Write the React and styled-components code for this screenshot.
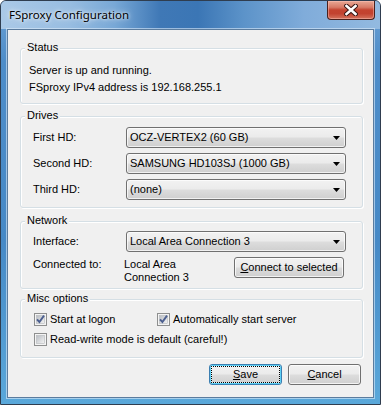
import React from 'react';
import styled, { createGlobalStyle } from 'styled-components';

const Global = createGlobalStyle`
  html, body { margin: 0; padding: 0; background: #ffffff; }
  body { font-family: "Liberation Sans", Arial, sans-serif; font-size: 11px; color: #000; }
  * { box-sizing: border-box; }
`;

const Frame = styled.div`
  width: 381px;
  height: 405px;
  border: 1px solid #2f3d4f;
  border-radius: 6px 6px 0 0;
  background: linear-gradient(to bottom, #6fa2d4 0px, #4e8dc9 60px, #4689c6 240px, #5aa8da 100%);
  display: flex;
  flex-direction: column;
  overflow: hidden;
`;

const TitleBar = styled.div`
  height: 28px;
  flex: none;
  display: flex;
  justify-content: space-between;
  align-items: flex-start;
  padding: 0 5px 0 8px;
  background: linear-gradient(
    to right,
    #aac9e7 0%,
    #98bde1 18%,
    #78a8d6 30%,
    #3f78b6 42%,
    #3b76b5 52%,
    #5c93c9 64%,
    #80acda 80%,
    #93bae0 100%
  );
`;

const Title = styled.div`
  margin-top: 6px;
  font-family: "Noto Sans", "Open Sans", sans-serif;
  font-size: 11.5px;
  line-height: 16px;
  color: #000;
  text-shadow: 0 0 6px rgba(255, 255, 255, 0.9), 0 0 3px rgba(255, 255, 255, 0.8);
`;

const CloseButton = styled.div`
  width: 48px;
  height: 19px;
  border: 1px solid #4a201c;
  border-top: none;
  border-radius: 0 0 4px 4px;
  background: linear-gradient(to bottom, #e9a895 0%, #d77a66 35%, #c4432f 50%, #c24230 70%, #d4735d 100%);
  box-shadow: inset 0 0 0 1px rgba(255, 200, 190, 0.45);
  display: flex;
  align-items: center;
  justify-content: center;
`;

const Client = styled.div`
  margin: 0 6px;
  height: 369px;
  flex: none;
  border: 1px solid #5b7c9e;
  box-shadow: 0 0 0 1px rgba(220, 235, 250, 0.6);
  background: #f0f0f0;
  padding: 18px 10px 0 12px;
  display: flex;
  flex-direction: column;
`;

const Group = styled.div`
  position: relative;
  height: ${(p) => p.$h}px;
  margin-top: ${(p) => p.$mt || 0}px;
  border: 1px solid #d5dfe5;
  border-radius: 3px;
  box-shadow: inset 1px 1px 0 #ffffff, 1px 1px 0 #ffffff;
  padding: ${(p) => p.$pt}px 0 0 ${(p) => p.$pl}px;
  display: flex;
  flex-direction: column;
  gap: ${(p) => p.$gap || 0}px;
`;

const Legend = styled.span`
  position: absolute;
  top: -8px;
  left: 4px;
  padding: 0 2px;
  background: #f0f0f0;
  line-height: 13px;
`;

const Line = styled.div`
  line-height: 13px;
  white-space: nowrap;
`;

const FieldRow = styled.div`
  display: flex;
  align-items: ${(p) => (p.$top ? 'flex-start' : 'center')};
  min-height: 21px;
`;

const Label = styled.div`
  width: ${(p) => p.$w}px;
  flex: none;
  line-height: 13px;
  white-space: nowrap;
`;

const Combo = styled.div`
  width: 220px;
  height: 21px;
  flex: none;
  border: 1px solid #707070;
  border-radius: 3px;
  background: linear-gradient(to bottom, #f2f2f2 0%, #ebebeb 48%, #dddddd 52%, #cfcfcf 100%);
  box-shadow: inset 0 0 0 1px rgba(255, 255, 255, 0.7);
  display: flex;
  align-items: center;
  justify-content: space-between;
  padding: 0 5px 0 3px;
  line-height: 13px;
  white-space: nowrap;
`;

const Value = styled.div`
  width: 110px;
  flex: none;
  line-height: 13px;
  padding-top: 1px;
`;

const Button = styled.div`
  position: relative;
  width: ${(p) => p.$w}px;
  height: 21px;
  flex: none;
  border: 1px solid ${(p) => (p.$default ? '#3c7fb1' : '#707070')};
  border-radius: 3px;
  background: linear-gradient(to bottom, #f2f2f2 0%, #ebebeb 48%, #dddddd 52%, #cfcfcf 100%);
  box-shadow: ${(p) =>
    p.$default
      ? 'inset 0 0 0 1px #5ed2f6, inset 0 0 0 2px rgba(255,255,255,0.5)'
      : 'inset 0 0 0 1px rgba(255,255,255,0.75)'};
  display: flex;
  align-items: center;
  justify-content: center;
  line-height: 13px;
  white-space: nowrap;

  ${(p) =>
    p.$default &&
    `&::after {
      content: "";
      position: absolute;
      inset: 1px;
      border: 1px dotted #000;
      border-radius: 1px;
    }`}
`;

const CheckRow = styled.div`
  display: flex;
  align-items: flex-start;
`;

const CheckItem = styled.div`
  display: flex;
  align-items: flex-start;
  gap: 3px;
  width: ${(p) => (p.$w ? `${p.$w}px` : 'auto')};
  flex: none;
  line-height: 13px;
  white-space: nowrap;
`;

const ButtonRow = styled.div`
  display: flex;
  justify-content: flex-end;
  gap: 6px;
  margin-top: 6px;
  margin-right: 2px;
`;

const Arrow = () => (
  <svg width="7" height="4" viewBox="0 0 7 4">
    <polygon points="0,0 7,0 3.5,4" fill="#000" />
  </svg>
);

const CloseX = () => (
  <svg width="14" height="12" viewBox="0 0 14 12">
    <path d="M2.5 2 L11.5 10 M11.5 2 L2.5 10" stroke="#3a1714" strokeWidth="4.6" strokeLinecap="square" />
    <path d="M2.5 2 L11.5 10 M11.5 2 L2.5 10" stroke="#ffffff" strokeWidth="2.6" strokeLinecap="square" />
  </svg>
);

const CheckBox = ({ checked }) => (
  <svg width="13" height="13" viewBox="0 0 13 13">
    <defs>
      <linearGradient id="cbg" x1="0" y1="0" x2="1" y2="1">
        <stop offset="0" stopColor="#b9bdc3" />
        <stop offset="1" stopColor="#f4f4f4" />
      </linearGradient>
    </defs>
    <rect x="0.5" y="0.5" width="12" height="12" fill="#f4f4f4" stroke="#8e8f8f" />
    <rect x="2.5" y="2.5" width="8" height="8" fill="url(#cbg)" stroke="#b4b7bb" strokeWidth="0.6" />
    {checked && (
      <path d="M3 6.3 L5.4 9 L10 2.6" fill="none" stroke="#4c5f8f" strokeWidth="1.9" strokeLinejoin="miter" />
    )}
  </svg>
);

export default function App() {
  return (
    <>
      <Global />
      <Frame>
        <TitleBar>
          <Title>FSproxy Configuration</Title>
          <CloseButton>
            <CloseX />
          </CloseButton>
        </TitleBar>
        <Client>
          <Group $h={56} $pt={15} $pl={8} $gap={4}>
            <Legend>Status</Legend>
            <Line>Server is up and running.</Line>
            <Line>FSproxy IPv4 address is 192.168.255.1</Line>
          </Group>

          <Group $h={92} $mt={12} $pt={10} $pl={12} $gap={5}>
            <Legend>Drives</Legend>
            <FieldRow>
              <Label $w={93}>First HD:</Label>
              <Combo>
                <span>OCZ-VERTEX2 (60 GB)</span>
                <Arrow />
              </Combo>
            </FieldRow>
            <FieldRow>
              <Label $w={93}>Second HD:</Label>
              <Combo>
                <span>SAMSUNG HD103SJ (1000 GB)</span>
                <Arrow />
              </Combo>
            </FieldRow>
            <FieldRow>
              <Label $w={93}>Third HD:</Label>
              <Combo>
                <span>(none)</span>
                <Arrow />
              </Combo>
            </FieldRow>
          </Group>

          <Group $h={68} $mt={13} $pt={9} $pl={12} $gap={5}>
            <Legend>Network</Legend>
            <FieldRow>
              <Label $w={93}>Interface:</Label>
              <Combo>
                <span>Local Area Connection 3</span>
                <Arrow />
              </Combo>
            </FieldRow>
            <FieldRow $top>
              <Label $w={91} style={{ paddingTop: 1 }}>Connected to:</Label>
              <Value>
                Local Area
                <br />
                Connection 3
              </Value>
              <Button $w={110}>
                <span>
                  <u>C</u>onnect to selected
                </span>
              </Button>
            </FieldRow>
          </Group>

          <Group $h={59} $mt={10} $pt={13} $pl={13} $gap={7}>
            <Legend>Misc options</Legend>
            <CheckRow>
              <CheckItem $w={123}>
                <CheckBox checked />
                <span>Start at logon</span>
              </CheckItem>
              <CheckItem>
                <CheckBox checked />
                <span>Automatically start server</span>
              </CheckItem>
            </CheckRow>
            <CheckRow>
              <CheckItem>
                <CheckBox />
                <span>Read-write mode is default (careful!)</span>
              </CheckItem>
            </CheckRow>
          </Group>

          <ButtonRow>
            <Button $w={73} $default>
              <span>
                <u>S</u>ave
              </span>
            </Button>
            <Button $w={73}>
              <span>
                <u>C</u>ancel
              </span>
            </Button>
          </ButtonRow>
        </Client>
      </Frame>
    </>
  );
}
